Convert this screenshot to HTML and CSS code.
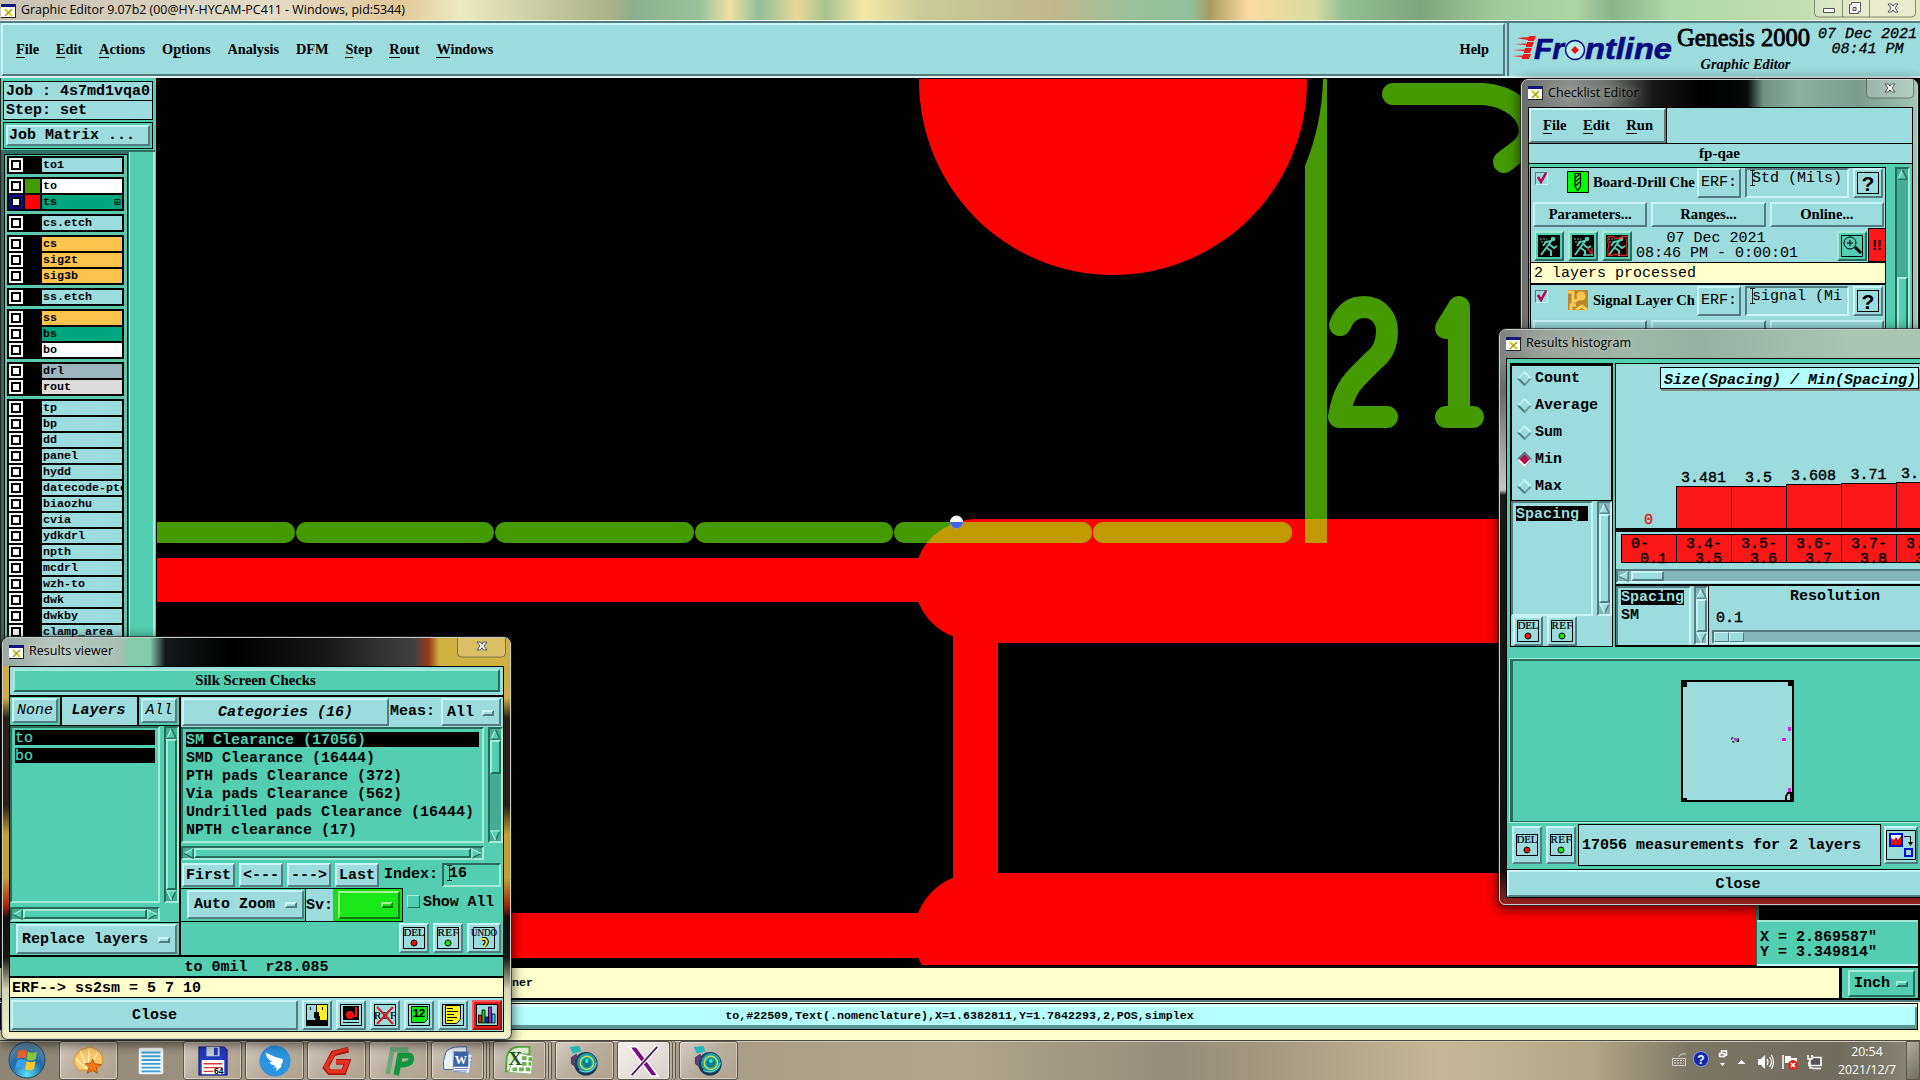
FILE: index.html
```html
<!DOCTYPE html>
<html lang="en">
<head>
  <meta charset="utf-8">
  <title>Graphic Editor 9.07b2</title>
  <link rel="stylesheet" href="styles.css">
</head>
<body>

<!-- shared icons -->
<svg width="0" height="0" class="defs">
  <symbol id="xapp" viewBox="0 0 15 14"><path fill="#fff" d="M0 0h15v14H0z"/><path fill="#14147c" d="M0 0h15v3H0z"/><path fill="#222" d="M14 0h1v14H0v-1h14z"/><path stroke="#d4cc20" stroke-width="2.4" d="M4 5l7 7"/><path stroke="#a09820" stroke-width="1.4" d="M11 5l-7 7"/></symbol>
  <symbol id="up" viewBox="0 0 12 12"><path class="tri" d="M6 1L1 11h10z"/><path class="tri-l" d="M1 11L6 1"/><path class="tri-d" d="M6 1l5 10H1"/></symbol>
  <symbol id="down" viewBox="0 0 12 12"><path class="tri" d="M6 11L1 1h10z"/><path class="tri-d" d="M11 1L6 11"/><path class="tri-l" d="M6 11L1 1h10"/></symbol>
  <symbol id="left" viewBox="0 0 12 12"><path class="tri" d="M1 6L11 1v10z"/><path class="tri-l" d="M1 6l10-5"/><path class="tri-d" d="M11 1v10L1 6"/></symbol>
  <symbol id="right" viewBox="0 0 12 12"><path class="tri" d="M11 6L1 1v10z"/><path class="tri-d" d="M11 6L1 11"/><path class="tri-l" d="M1 11V1l10 5"/></symbol>
  <symbol id="del" viewBox="0 0 24 24"><path fill="none" stroke="#000" d="M1.500 1.500h21v21h-21z"/><text x="12" y="10" class="itxt" textLength="21">DEL</text><circle cx="12" cy="17" r="3" fill="#f01010" stroke="#000"/></symbol>
  <symbol id="ref" viewBox="0 0 24 24"><path fill="none" stroke="#000" d="M1.500 1.500h21v21h-21z"/><text x="12" y="10" class="itxt" textLength="21">REF</text><circle cx="12" cy="17" r="3" fill="#10e810" stroke="#000"/></symbol>
  <symbol id="run" viewBox="0 0 24 24"><path d="M1 1h22v22H1z"/><g fill="none" stroke="#54ceb0" stroke-width="2"><path d="M15 6l-6 8-5 7M12 10l5 4 3-2M10 14l4 3v5M14 7l-5 1-3 4"/></g><circle cx="16" cy="5" r="2.300" fill="#54ceb0"/><path stroke="#54ceb0" stroke-dasharray="2 1" d="M3 5h7M4 8h4"/></symbol>
  <symbol id="disc" viewBox="0 0 34 34"><circle cx="18" cy="20" r="12.500" fill="#203858"/><circle cx="19" cy="19" r="10.500" fill="#18a0a8"/><circle cx="19" cy="19" r="7" fill="none" stroke="#d0d850" stroke-width="1.500"/><circle cx="19" cy="19" r="4.500" fill="#107880"/><circle cx="19" cy="17" r="2" fill="#30e8e0"/><path fill="#20b8b8" d="M1 2l10-1 2 6-9 2z"/><path fill="#5a4070" d="M2 13l6-4 1 5-4 4 2 6-5-4z"/><path fill="none" stroke="#7ce8d0" d="M11 27c8 4 16 0 18-8"/></symbol>
</svg>

<div class="desktop">

  <div class="editor">
    <div class="titlebar">
      <svg class="app"><use href="#xapp"/></svg>
      <span>Graphic Editor 9.07b2 (00@HY-HYCAM-PC411 - Windows, pid:5344)</span>
      <div class="winbtns">
        <svg width="103" height="18" viewBox="0 0 103 18"><path class="wb" d="M.5 0v13q0 4 4 4h93q4 0 4-4V0M28.500 0v17M55.500 0v17"/><path class="wg" d="M9.500 8.500h11v4h-11z"/><path class="wg" fill-rule="evenodd" d="M37.500 2.500h9v9h-2v2h-9v-9h2zM39 7.500v3h3v-3z"/><path class="wg" d="M74 4h3.500l1.500 2.200L80.500 4H84l-3 4 3 4h-3.500L79 9.800 77.500 12H74l3-4z"/></svg>
      </div>
    </div>

    <div class="header">
      <nav class="menubar raised">
        <span><u>F</u>ile</span><span><u>E</u>dit</span><span><u>A</u>ctions</span><span>O<u>p</u>tions</span><span>Analysis</span><span>DFM</span><span><u>S</u>tep</span><span><u>R</u>out</span><span><u>W</u>indows</span>
        <span class="help">Help</span>
      </nav>
      <div class="brand">
        <svg width="161" height="32" viewBox="0 0 161 32">
          <g fill="#f01818"><path d="M5 6l12-1v-1h7l-2 5h-6V8zM3 12l12-.500V10h7l-2 5h-6v-2zM1 18l12-.500V16h7l-2 5h-6v-2zM0 24l11-.500V22h8l-2 5h-7v-2z"/></g>
          <text x="22" y="27" class="logo" textLength="30" lengthAdjust="spacingAndGlyphs">Fr</text>
          <circle cx="63" cy="18" r="9.500" fill="#b8f0f0" stroke="#0a0a80" stroke-width="1.500"/><path fill="#f01010" d="M63 14l4 4-4 4-4-4z"/>
          <text x="73" y="27" class="logo" textLength="87" lengthAdjust="spacingAndGlyphs">ntline</text>
        </svg>
        <div class="product"><b>Genesis 2000</b><i>Graphic Editor</i></div>
        <div class="date">07 Dec 2021<br>08:41 PM</div>
      </div>
    </div>

    <div class="work">
      <aside class="side">
        <div class="job">Job : 4s7md1vqa0</div>
        <div class="job">Step: set</div>
        <div class="matrix"><div class="raised">Job Matrix ...</div></div>
        <div class="layers">
          <div class="list">
            <div class="grp"><div class="ly"><i></i><em></em><b>to1</b></div></div>
            <div class="grp"><div class="ly"><i></i><em class="g"></em><b class="white">to</b></div><div class="ly on"><i></i><em class="r"></em><b class="mask">ts</b><s>⊞</s></div></div>
            <div class="grp"><div class="ly"><i></i><em></em><b>cs.etch</b></div></div>
            <div class="grp"><div class="ly"><i></i><em></em><b class="sig">cs</b></div><div class="ly"><i></i><em></em><b class="sig">sig2t</b></div><div class="ly"><i></i><em></em><b class="sig">sig3b</b></div></div>
            <div class="grp"><div class="ly"><i></i><em></em><b>ss.etch</b></div></div>
            <div class="grp"><div class="ly"><i></i><em></em><b class="sig">ss</b></div><div class="ly"><i></i><em></em><b class="mask">bs</b></div><div class="ly"><i></i><em></em><b class="white">bo</b></div></div>
            <div class="grp"><div class="ly"><i></i><em></em><b class="drl">drl</b></div><div class="ly"><i></i><em></em><b class="rout">rout</b></div></div>
            <div class="grp">
              <div class="ly"><i></i><em></em><b>tp</b></div>
              <div class="ly"><i></i><em></em><b>bp</b></div>
              <div class="ly"><i></i><em></em><b>dd</b></div>
              <div class="ly"><i></i><em></em><b>panel</b></div>
              <div class="ly"><i></i><em></em><b>hydd</b></div>
              <div class="ly"><i></i><em></em><b>datecode-ptc</b></div>
              <div class="ly"><i></i><em></em><b>biaozhu</b></div>
              <div class="ly"><i></i><em></em><b>cvia</b></div>
              <div class="ly"><i></i><em></em><b>ydkdrl</b></div>
              <div class="ly"><i></i><em></em><b>npth</b></div>
              <div class="ly"><i></i><em></em><b>mcdrl</b></div>
              <div class="ly"><i></i><em></em><b>wzh-to</b></div>
              <div class="ly"><i></i><em></em><b>dwk</b></div>
              <div class="ly"><i></i><em></em><b>dwkby</b></div>
              <div class="ly"><i></i><em></em><b>clamp_area</b></div>
            </div>
          </div>
          <div class="trough"></div>
        </div>
      </aside>

      <!-- board view -->
      <svg class="board" width="1600" height="888" viewBox="156 78 1600 888">
        <path d="M156 78h1600v888H156z"/>
        <clipPath id="view"><path d="M157 79h1599v886H157z"/></clipPath>
        <clipPath id="copper"><path d="M1800 519H977a63 61 0 0 0-63 61v63h886z"/></clipPath>
        <g clip-path="url(#view)">
          <g fill="#f00">
            <ellipse cx="1113" cy="81" rx="194" ry="194"/>
            <path d="M157 558h770v44H157zM976 519h780v124H976zM953 600h45v300h-45zM976 873h780v92H976zM157 913h770v45H157z"/>
            <ellipse cx="977" cy="580" rx="63" ry="61"/>
            <ellipse cx="977" cy="935" rx="63" ry="62"/>
          </g>
          <g fill="#449a00">
            <path d="M1323 79h4v464h-22V166q17-42 18-87z"/>
            <rect x="97" y="522" width="198" height="21" rx="10"/><rect x="296" y="522" width="198" height="21" rx="10"/><rect x="495" y="522" width="199" height="21" rx="10"/>
            <rect x="695" y="522" width="198" height="21" rx="10"/><rect x="894" y="522" width="198" height="21" rx="10"/><rect x="1093" y="522" width="199" height="21" rx="10"/>
          </g>
          <g fill="#c09a00" clip-path="url(#copper)"><rect x="695" y="522" width="198" height="21" rx="10"/><rect x="894" y="522" width="198" height="21" rx="10"/><rect x="1093" y="522" width="199" height="21" rx="10"/><path d="M1305 519h22v24h-22z"/></g>
          <g fill="none" stroke="#449a00" stroke-width="22" stroke-linecap="round" stroke-linejoin="round">
            <path d="M1393 94h90C1510 96 1530 112 1530 132 1529 146 1516 152 1504 162"/>
            <path d="M1340 325C1345 313 1353 307 1364 307 1378 307 1387 318 1387 331 1387 345 1382 354 1374 360L1358 376C1346 388 1342 400 1339 417H1387"/>
            <path d="M1446 328l13-21v110M1446 417h27"/>
          </g>
          <circle cx="956.500" cy="522" r="6.500" fill="#fff"/><path fill="#4060f0" d="M950 522a6.500 6.500 0 0 0 13 0z"/>
        </g>
      </svg>

      <div class="right">
        <div class="mini"></div>
        <div class="coords">X = 2.869587"<br>Y = 3.349814"</div>
      </div>
    </div>

    <div class="prompt"><div class="msg">ner</div><div class="unit green"><div class="raised opt">Inch<span class="tab"></span></div></div></div>
    <div class="status"><div>to,#22509,Text(.nomenclature),X=1.6382811,Y=1.7842293,2,POS,simplex</div></div>
  </div>

  <!-- checklist editor -->
  <div class="win checklist">
    <div class="wtitle"><svg class="app"><use href="#xapp"/></svg><span>Checklist Editor</span>
      <svg class="close" width="48" height="20" viewBox="0 0 48 20"><path class="wb" d="M.5 0v15q0 4 4 4h39q4 0 4-4V0"/><path class="wg" d="M19 5h3.500L24 7.200 25.500 5H29l-3 4 3 4h-3.500L24 10.800 22.500 13H19l3-4z"/></svg>
    </div>
    <div class="wbody">
      <div class="cmenu raised"><span><u>F</u>ile</span><span><u>E</u>dit</span><span><u>R</u>un</span></div>
      <div class="cname">fp-qae</div>
      <div class="cmain green">
        <div class="checks">
          <div class="chk">
            <div class="row1">
              <span class="tick"><svg width="13" height="13"><path d="M3 5l3 5 5-9" fill="none" stroke="#b80050" stroke-width="2.500"/></svg></span>
              <svg width="22" height="22" viewBox="0 0 22 22"><path fill="#0f0" stroke="#000" d="M.5.500h21v21H.5z"/><path fill="none" stroke="#000" stroke-width="1.200" d="M8 2.500h5.500v13l-2.800 4-2.700-4zM8 7l5-4M8 11l5-4M8 15l5-4"/></svg>
              <span class="cn">Board-Drill Che</span>
              <span class="raised erf">ERF:</span><span class="field caret">Std (Mils)</span><span class="raised q"><b>?</b></span>
            </div>
            <div class="row2"><span class="raised">Parameters...</span><span class="raised">Ranges...</span><span class="raised">Online...</span></div>
            <div class="row3">
              <span class="green raised ib"><svg><use href="#run"/></svg></span>
              <span class="green raised ib"><svg viewBox="0 0 24 24"><use href="#run"/><path fill="none" stroke="#d02020" stroke-width="1.500" d="M16 14l5 6v-6"/><path stroke="#54ceb0" stroke-width="1.500" d="M12 21h10"/></svg></span>
              <span class="green raised ib"><svg viewBox="0 0 24 24"><use href="#run"/><path fill="none" stroke="#e02020" stroke-width="1.300" d="M3 2.500h5l2 2h5l2-2h5v6l-1 3 1 3v7h-6l-2-1H9l-2 1H3v-7l1-3-1-3z"/></svg></span>
              <span class="when">07 Dec 2021<br>08:46 PM - 0:00:01</span>
              <span class="green raised ib"><svg viewBox="0 0 24 24"><path fill="none" stroke="#000" d="M1.500 1.500h21v21h-21z"/><circle cx="10" cy="9" r="6" fill="none" stroke="#000"/><path stroke="#000" d="M7 9h6M10 6v6"/><path stroke="#000" stroke-width="3" d="M15 13l6 6"/></svg></span>
              <span class="alert">!!</span>
            </div>
            <div class="processed">2 layers processed</div>
          </div>
          <div class="chk">
            <div class="row1">
              <span class="tick"><svg width="13" height="13"><path d="M3 5l3 5 5-9" fill="none" stroke="#b80050" stroke-width="2.500"/></svg></span>
              <svg width="22" height="22" viewBox="0 0 22 22"><path fill="#b88830" d="M1 1h20v20H1z"/><path fill="none" stroke="#fcc850" stroke-width="3" d="M1 3h5v10l6-3M4 21v-5h5M9 21l6-4 5 4"/><circle cx="14" cy="7" r="4.500" fill="#fcc850"/></svg>
              <span class="cn">Signal Layer Ch</span>
              <span class="raised erf">ERF:</span><span class="field caret">signal (Mi</span><span class="raised q"><b>?</b></span>
            </div>
            <div class="row2"><span class="raised"></span><span class="raised"></span><span class="raised"></span></div>
          </div>
        </div>
        <div class="vbar"><svg><use href="#up"/></svg><div class="gap"></div><div class="thumb raised"></div></div>
      </div>
    </div>
  </div>

  <!-- results histogram -->
  <div class="win histogram">
    <div class="wtitle"><svg class="app"><use href="#xapp"/></svg><span>Results histogram</span></div>
    <div class="wbody green">
      <div class="htop teal">
        <div class="hleft">
          <div class="radios">
            <label><i></i>Count</label><label><i></i>Average</label><label><i></i>Sum</label><label class="sel"><i></i>Min</label><label><i></i>Max</label>
          </div>
          <div class="lists">
            <div class="sunk lb"><div class="hot">Spacing</div></div>
            <div class="vbar"><svg><use href="#up"/></svg><div class="thumb raised"></div><svg><use href="#down"/></svg></div>
          </div>
          <div class="btns"><span class="raised ib"><svg><use href="#del"/></svg></span><span class="raised ib"><svg><use href="#ref"/></svg></span></div>
        </div>
        <div class="hright">
          <div class="chart">
            <div class="caption">Size(Spacing) / Min(Spacing)</div>
            <div class="bars">
              <div class="bar zero"><span>0</span><i style="height:0"></i></div>
              <div class="bar"><span>3.481</span><i style="height:42px"></i></div>
              <div class="bar"><span>3.5</span><i style="height:42px"></i></div>
              <div class="bar"><span>3.608</span><i style="height:44px"></i></div>
              <div class="bar"><span>3.71</span><i style="height:45px"></i></div>
              <div class="bar cut"><span>3.</span><i style="height:46px"></i></div>
            </div>
            <div class="ranges"><div>0-<br> 0.1</div><div>3.4-<br> 3.5</div><div>3.5-<br> 3.6</div><div>3.6-<br> 3.7</div><div>3.7-<br> 3.8</div><div>3.<br> 3</div></div>
            <div class="hbar"><svg><use href="#left"/></svg><div class="thumb raised"></div></div>
          </div>
          <div class="hlow">
            <div class="sunk lb2"><div class="hot">Spacing</div><div>SM</div></div>
            <div class="vbar"><svg><use href="#up"/></svg><div class="thumb raised"></div><svg><use href="#down"/></svg></div>
            <div class="reso"><h4>Resolution</h4><span>0.1</span><div class="slider"><i></i><i></i></div></div>
          </div>
        </div>
      </div>
      <div class="preview">
        <svg width="114" height="123" viewBox="0 0 114 123"><path fill="#9cdcdc" stroke="#000" stroke-width="2" d="M1 1h111v120H1z"/><path d="M1 1h5v6H1zM107 1h5v5h-5zM1 118h5v3H1z"/><path fill="none" stroke="#000" stroke-width="2" d="M105 122v-6l2-3h3v9"/><path fill="#d020e0" d="M107 47h3v4h-3zM101 58h4v3h-4zM107 108h3v4h-3z"/><path fill="#a050c0" d="M53 58h5v3h-5z"/><path fill="none" stroke="#000" d="M52.500 58h-2v1.500M51.500 61v1h2M57.500 59v2.500h-2"/></svg>
      </div>
      <div class="hinfo teal">
        <span class="raised ib"><svg><use href="#del"/></svg></span><span class="raised ib"><svg><use href="#ref"/></svg></span>
        <div class="count">17056 measurements for 2 layers</div>
        <span class="raised ib wide"><svg viewBox="0 0 30 30"><path fill="none" stroke="#000" d="M.5.500h29v29H.5z"/><path fill="#fff" stroke="#0010d0" stroke-width="2" d="M4 4h12v12H4z"/><path fill="#e01010" d="M5 14V8l3 2 2-3 2 3 3-4v9H5z"/><path fill="none" stroke="#000" d="M18 6.500h6.500V15"/><path d="M22 12h5l-2.500 4z"/><path fill="none" stroke="#0010d0" stroke-width="2" d="M19 19h7v7h-7z"/></svg></span>
      </div>
      <div class="hclose teal raised">Close</div>
    </div>
  </div>

  <!-- results viewer -->
  <div class="win viewer">
    <div class="wtitle"><svg class="app"><use href="#xapp"/></svg><span>Results viewer</span>
      <svg class="close" width="49" height="20" viewBox="0 0 49 20"><path class="wb" d="M.5 0v15q0 4 4 4h40q4 0 4-4V0"/><path class="wg" d="M20 4h3.500L25 6.200 26.500 4H30l-3 4 3 4h-3.500L25 9.800 23.500 12H20l3-4z"/></svg>
    </div>
    <div class="wbody green">
      <div class="vhead"><div class="raised">Silk Screen Checks</div></div>
      <div class="vmain">
        <div class="vl">
          <div class="tabs"><span class="teal raised">None</span><b>Layers</b><span class="teal raised">All</span></div>
          <div class="lists">
            <div class="sunk lb"><div class="hot">to</div><div class="hot">bo</div></div>
            <div class="vbar"><svg><use href="#up"/></svg><div class="thumb raised"></div><svg><use href="#down"/></svg></div>
          </div>
          <div class="hbar"><svg><use href="#left"/></svg><div class="thumb raised"></div><svg><use href="#right"/></svg></div>
          <div class="repl"><div class="teal raised opt">Replace layers<span class="tab"></span></div></div>
        </div>
        <div class="vr">
          <div class="cats teal"><div class="raised cat">Categories (16)</div><span>Meas:</span><div class="raised opt">All<span class="tab"></span></div></div>
          <div class="lists">
            <div class="sunk lb"><div class="hot">SM Clearance (17056)</div><div>SMD Clearance (16444)</div><div>PTH pads Clearance (372)</div><div>Via pads Clearance (562)</div><div>Undrilled pads Clearance (16444)</div><div>NPTH clearance (17)</div></div>
            <div class="vbar"><svg><use href="#up"/></svg><div class="thumb raised short"></div><div class="gap"></div><svg><use href="#down"/></svg></div>
          </div>
          <div class="hbar"><svg><use href="#left"/></svg><div class="thumb raised"></div><svg><use href="#right"/></svg></div>
          <div class="nav"><span class="teal raised">First</span><span class="teal raised">&lt;---</span><span class="teal raised">---&gt;</span><span class="teal raised">Last</span><em>Index:</em><span class="field caret">16</span></div>
          <div class="zoomrow">
            <div class="zb"><div class="teal raised opt">Auto Zoom<span class="tab"></span></div></div>
            <div class="sv"><span>Sv:</span><div class="lime"><div class="raised opt"><span class="tab"></span></div></div></div>
            <i class="cb"></i><span>Show All</span>
          </div>
          <div class="btns teal"><span class="raised ib"><svg><use href="#del"/></svg></span><span class="raised ib"><svg><use href="#ref"/></svg></span>
            <span class="raised ib undo"><svg viewBox="0 0 28 24"><path fill="none" stroke="#000" d="M3.500 1.500h21v21h-21z"/><text x="14" y="10" class="itxt" textLength="26" lengthAdjust="spacingAndGlyphs">UNDO</text><path fill="none" stroke="#000" stroke-width="4" d="M12 13h3q3 2 1 5l-2 2"/><path fill="none" stroke="#fce820" stroke-width="2" d="M11 13h4q3 2 1 5l-2 3"/></svg></span></div>
        </div>
      </div>
      <div class="vinfo">to 0mil  r28.085</div>
      <div class="verf">ERF--&gt; ss2sm = 5 7 10</div>
      <div class="vfoot teal">
        <div class="raised">Close</div>
        <span class="raised ib"><svg viewBox="0 0 24 24"><path d="M1 1h22v22H1z"/><path fill="#9cdcdc" d="M2 2h9v12l-1 3H2z"/><path fill="#fcf020" d="M12 2h10v15h-7v-4h-3z"/><path d="M5 4h1v3H5zM17 4h1v3h-1zM9 9h5v6H9z"/></svg></span>
        <span class="raised ib"><svg viewBox="0 0 24 24"><path fill="#9cdcdc" stroke="#000" d="M1.500 1.500h21v21h-21z"/><path d="M4 3h16v14H4z"/><path stroke="#000" d="M4 19.500h16"/><circle cx="11" cy="12" r="4" fill="#f01010"/><path fill="#f01010" d="M16 4h2v10h-4v-2h2z"/></svg></span>
        <span class="raised ib"><svg viewBox="0 0 24 24"><path fill="none" stroke="#000" d="M1.500 1.500h21v21h-21z"/><text x="12" y="16" class="itxt" textLength="22">REF</text><path stroke="#e01818" stroke-width="2" d="M4 4l16 17M20 4L4 21"/></svg></span>
        <span class="raised ib"><svg viewBox="0 0 24 24"><path fill="#9cdcdc" stroke="#000" d="M1.500 1.500h21v21h-21z"/><path fill="#14e814" stroke="#000" d="M4.500 3.500h16v13l-3 3h-13z"/><text x="12" y="14" class="itxt big">12</text></svg></span>
        <span class="raised ib"><svg viewBox="0 0 24 24"><path fill="#9cdcdc" stroke="#000" d="M1.500 1.500h21v21h-21z"/><path fill="#fcf020" stroke="#000" d="M4.500 2.500h15v14l-4 4h-11z"/><path stroke="#000" d="M6 5.500h6M6 8.500h11M6 11.500h7M6 14.500h10M6 17.500h6"/></svg></span>
        <span class="raised ib hot-red"><svg viewBox="0 0 24 24"><path fill="#9cdcdc" stroke="#000" d="M1.500 1.500h21v21h-21z"/><g stroke="#000" stroke-width=".8"><path fill="#e01818" d="M3.500 12h3v8h-3z"/><path fill="#20c020" d="M7 7h3v13H7z"/><path fill="#1818e0" d="M10.500 14h3v6h-3z"/><path fill="#b020c0" d="M13.500 4h3v16h-3z"/><path fill="#20d8e8" d="M17 11h3v9h-3z"/></g></svg></span>
      </div>
    </div>
  </div>

  <!-- taskbar -->
  <div class="taskbar">
    <div class="orb"><svg width="38" height="38" viewBox="0 0 38 38"><defs><radialGradient id="orbg" cx=".5" cy=".9" r=".9"><stop offset="0" stop-color="#5ce0f8"/><stop offset=".5" stop-color="#1c6ca8"/><stop offset="1" stop-color="#6c90a8"/></radialGradient></defs><circle cx="19" cy="19" r="18" fill="url(#orbg)" stroke="#28485c"/><path fill="#f06028" d="M10 10q5-3 9 0l-1 8q-4-3-9 0z"/><path fill="#8cc83c" d="M20 10.500q4 2.500 9 0l-1.500 8q-5 2-9 0z"/><path fill="#3ca0e8" d="M9 19.500q4-3 9 0l-1.500 8q-4-3-9 0z"/><path fill="#fcc828" d="M18.500 20q4 2.500 9 0l-1.500 8q-4 2.500-9 0z"/></svg></div>
    <div class="tb"><svg viewBox="0 0 34 34"><path fill="#fcc868" stroke="#e08820" d="M7 27L1 20Q0 14 4 10 7 4 13 4q5-4 10 0 6 2 8 8 2 6-2 11l-6 4z"/><path fill="none" stroke="#fff0c0" stroke-width="1.500" d="M14 26L3 14M15 25L8 7M16 25L17 4M17 25L26 8"/><path fill="#f07818" stroke="#b85008" d="M21 15l2 5 7 1-5 3 1 6-5-3-6 3 2-6-4-4 6-1z"/></svg></div>
    <div class="tb flat"><svg viewBox="0 0 34 34"><rect x="4" y="3" width="26" height="28" rx="2" fill="#eef6fa"/><path stroke="#3c9cd0" stroke-width="2" d="M7 8h20M7 12h20M7 16h20M7 20h20M7 24h20M7 28h20"/></svg></div>
    <div class="tb"><svg viewBox="0 0 34 34"><path fill="#2438c0" stroke="#101c70" d="M2 2h27l3 3v27H2z"/><path fill="#c4ccd8" d="M10 2h14v10H10z"/><path fill="#2438c0" d="M18 3h4v8h-4z"/><path fill="#fff" d="M5 16h24v15H5z"/><path stroke="#d03838" stroke-width="1.500" d="M7 20h20M7 24h20M7 28h10"/><text x="23" y="31" class="t64">64</text></svg></div>
    <div class="tb"><svg viewBox="0 0 34 34"><circle cx="17" cy="17" r="16.500" fill="#2c94e0"/><path fill="#fff" d="M7 8q9 5 18 7 1 4-2 7l1 1-6 5 1-4h-4l3-2q-6-1-7-4l3 0q-6-3-7-10z"/></svg></div>
    <div class="tb"><svg viewBox="0 0 34 34"><path fill="none" stroke="#a81810" stroke-width="6" d="M29 5L13 9 5 24l4 5h15l4-11H16"/><path fill="none" stroke="#e83020" stroke-width="4" d="M29 4L14 8 5 23l4 5h15l4-10H16"/></svg></div>
    <div class="tb"><svg viewBox="0 0 34 34"><path fill="none" stroke="#6ca878" stroke-width="5" d="M5 31L10 5h17"/><path fill="none" stroke="#109840" stroke-width="6" d="M14 32l4-21h8q6 0 3 7-3 3-12 3"/></svg></div>
    <div class="tb stack w54"><svg viewBox="0 0 34 34"><path fill="#e8f0f8" stroke="#3868a8" d="M4 8q4-6 14-6h8v24H2q-2-8 2-18z"/><path fill="#fff" stroke="#8ca0c0" d="M12 7l20 3-3 20-17-2z"/><path fill="#3c64a8" d="M13 7h15v16H12z"/><text x="20" y="20" class="off">W</text><path stroke="#5878b0" d="M13 25h15M13 27.500h14M29 14h2M29 18h2"/></svg></div>
    <div class="tb stack w54 ex"><svg viewBox="0 0 34 34"><path fill="#dcecd0" stroke="#58a040" stroke-width="2" d="M3 12Q6 2 16 2h11v8H16v18H2z"/><path fill="#fff" stroke="#90b880" d="M12 8l19 4-2 19-24-2z"/><path fill="#6cb050" d="M19 12h5v4h-5zM26 13h4v4h-4zM19 18h5v4h-5zM26 18h3v4h-3zM9 24h5v4H9zM16 24h5v4h-5zM23 24h5v4h-5z"/><text x="12" y="21" class="off xl">X</text></svg></div>
    <div class="tb disc"><svg><use href="#disc"/></svg></div>
    <div class="tb stack w54 act"><svg viewBox="0 0 34 34"><path fill="#7c0c84" stroke="#fff" stroke-width="1.500" d="M2 2h7l23 31h-7z"/><path stroke="#fff" stroke-width="4" d="M31 2L4 32"/><path stroke="#502058" stroke-width="2" d="M31 2L4 32"/></svg></div>
    <div class="tb disc"><svg><use href="#disc"/></svg></div>
    <div class="tray">
      <svg width="158" height="40" viewBox="1670 1040 158 40">
        <g fill="none" stroke="#e4e4e0"><path d="M1674 1059.500h10M1674 1062h10" stroke-dasharray="2 1"/><path d="M1672.500 1057.500h13v7h-13zM1679 1056q1-4 7-3" opacity=".8"/></g>
        <circle cx="1701" cy="1058" r="7.500" fill="#1428b0" stroke="#8898d0"/><text x="1701" y="1063" class="qm">?</text>
        <path fill="none" stroke="#fff" stroke-width="1.500" d="M1719.500 1052.500h5v3h-5zM1721.500 1052v-2h5v4h-2"/><path fill="#fff" d="M1720 1062h5l-2.500 3zM1737.500 1063h8l-4-4z"/>
        <path fill="#fff" d="M1758 1058h3l4-4v14l-4-4h-3z"/><path fill="none" stroke="#fff" stroke-width="1.200" d="M1767 1058q2 3 0 6M1769.500 1056q4 5 0 10M1771.500 1054q4 7 0 14"/>
        <path fill="none" stroke="#fff" stroke-width="1.500" d="M1783 1054v14"/><path fill="#fff" d="M1785 1055h6v2h6v7h-6v-2h-6z"/><circle cx="1793" cy="1064" r="5" fill="#d82820"/><path stroke="#fff" stroke-width="1.600" d="M1791 1062l4 4M1795 1062l-4 4"/>
        <path fill="#555" stroke="#fff" stroke-width="1.600" d="M1812 1056.500h9v8h-12v-4M1813 1067.500h8"/><path fill="none" stroke="#fff" stroke-width="1.500" d="M1808 1054v4h4v-4M1810 1058v9h3"/>
      </svg>
      <div class="clock">20:54<br>2021/12/7</div>
      <div class="peek"></div>
    </div>
  </div>
</div>
</body>
</html>
```

FILE: styles.css
```css
* { box-sizing: border-box; }

body {
  margin: 0;
  background: #000;
  overflow: hidden;
}

.defs { position: absolute; }

.desktop {
  position: relative;
  display: flex;
  flex-direction: column;
  width: 1920px;
  height: 1080px;
  overflow: hidden;
  font: bold 15px/18px "Liberation Mono", monospace;
  color: #000;
}

.desktop, .teal { --face: #9cdcdc; --light: #c8f6f6; --dark: #527c80; --trough: #84b8b8; }
.green { --face: #54ceb0; --light: #a4ecd8; --dark: #286c5c; --trough: #44ac94; }

.raised {
  background: var(--face);
  border: 2px solid;
  border-color: var(--light) var(--dark) var(--dark) var(--light);
}
.sunk, .field {
  border: 2px solid;
  border-color: var(--dark) var(--light) var(--light) var(--dark);
}
.caret::before {
  content: "";
  display: inline-block;
  width: 5px;
  height: 14px;
  margin: 0 -3px 0 -3px;
  vertical-align: top;
  border: solid #222;
  border-width: 1px 0;
  background: linear-gradient(#222, #222) 2px 0 / 1px 100% no-repeat;
}
u { text-decoration: none; border-bottom: 1px solid #000; }

.tri { fill: var(--face); }
.tri-l { fill: none; stroke: var(--light); stroke-width: 1.5; }
.tri-d { fill: none; stroke: var(--dark); stroke-width: 1.5; }
.itxt { font: 11px "Liberation Serif", serif; text-anchor: middle; stroke: #000; stroke-width: .2; }
.itxt.big { font: bold 11px "Liberation Sans", sans-serif; }

.ib { display: flex; align-items: center; justify-content: center; width: 30px; height: 30px; flex: none; }
.ib svg { width: 24px; height: 24px; display: block; }

.opt { display: flex; align-items: center; justify-content: space-between; }
.tab { width: 12px; height: 6px; border: 2px solid; border-color: var(--light) var(--dark) var(--dark) var(--light); }

/* main window */
.editor { display: flex; flex-direction: column; height: 1040px; }

.titlebar {
  display: flex;
  height: 21px;
  padding-left: 1px;
  font: 12.4px/20px "Open Sans", sans-serif;
  background: linear-gradient(90deg, #c8c2b4, #e4dcc8 14%, #e0c898 20.8%, #ecebc0 24%, #a8b088 32%, #88b090 33%, #98c49c 36.5%, #f0e0a0 38%, #90c098 39.5%, #e8d898 41.5%, #a8c490 43%, #f4e8a8 45%, #c8cc98 48%, #c0b88c 55%, #98c09c 59%, #90c09c 62%, #a89c60 63%, #f8dca0 65%, #d8dca0 68.5%, #90c094 70%, #80a480 74%, #a0cc9c 78%, #b0d4a4 82%, #88b48c 84%, #b0d8a8 87%, #c4dcb0 94%, #e4e8c0 97%);
  border-bottom: 1px solid #eef2ea;
}
.app { width: 15px; height: 14px; margin: 4px 5px 0 0; flex: none; }
.titlebar span { white-space: nowrap; }
.winbtns { margin: 0 3px 0 auto; }
.winbtns svg { display: block; }
.wb { fill: rgba(255,255,255,.2); stroke: rgba(70,75,60,.6); }
.wg { fill: #fafafa; stroke: #555; }

.header { display: flex; height: 57px; background: #9cdcdc; border-top: 2px solid #527c80; border-bottom: 2px solid #dcf4f4; }
.menubar {
  display: flex;
  align-items: center;
  gap: 16.9px;
  width: 1504px;
  flex: none;
  margin: 0 2px 0 1px;
  padding: 0 14px 2px 13px;
  font: bold 14.3px/16px "Liberation Serif", serif;
}
.help { margin-left: auto; }
.brand {
  display: flex;
  width: 412px;
  padding: 3px 3px 0 2px;
  border-left: 2px solid #527c80;
}
.brand svg { margin: 6px 0 0 1px; flex: none; }
.logo { font: italic bold 29px "Liberation Sans", sans-serif; fill: #0a0a80; stroke: #0a0a80; stroke-width: .6; }
.product { display: flex; flex-direction: column; align-items: center; width: 141px; flex: none; font-family: "Liberation Serif", serif; }
.product b { font-size: 24.6px; line-height: 25px; font-weight: normal; -webkit-text-stroke: .8px #000; margin-top: -1px; white-space: nowrap; }
.product i { font-size: 14.4px; line-height: 20px; margin-top: 4px; margin-left: 4px; }
.date { font: italic 15px/15px "Liberation Mono", monospace; -webkit-text-stroke: .3px #000; text-align: center; white-space: nowrap; margin-left: 4px; padding-top: 1px; }

.work { display: flex; height: 888px; background: #000; }

.side { width: 156px; height: 570px; background: #54ceb0; padding: 3px 1px 0 2px; border-left: 1px solid #222; }
.job { height: 20px; width: 150px; margin-bottom: -1px; padding-left: 2px; background: #9cdcdc; border: 1px solid #000; line-height: 20px; white-space: pre; }
.matrix { width: 150px; height: 27px; margin-top: 3px; padding: 2px; border: 1px solid #000; }
.matrix .raised { height: 21px; padding-left: 1px; line-height: 18px; }
.layers { display: flex; margin: 1px 0 0 -2px; background: #2e6e60; border-top: 2px solid #2e6e60; height: 502px; }
.list { width: 124px; flex: none; margin: 2px 0 0 3px; padding: 1px 2px; background: #5cc8ac; border: 1px solid #000; display: flex; flex-direction: column; gap: 3px; overflow: hidden; }
.grp { flex: none; display: flex; flex-direction: column; gap: 2px; padding: 2px; background: #000; width: 117px; }
.ly { position: relative; display: flex; gap: 2px; height: 14px; font-size: 11.67px; line-height: 15px; }
.ly i { width: 14px; flex: none; background: #fff; border: 2px solid #fff; outline: 2px solid #000; outline-offset: -4px; }
.ly em { width: 15px; flex: none; }
.ly em.g { background: #449a00; }
.ly em.r { background: #f00; }
.ly b { flex: 1; overflow: hidden; white-space: nowrap; padding-left: 1px; background: #9cdcdc; }
.ly b.white { background: #fff; }
.ly b.mask { background: #00a67e; }
.ly b.sig { background: #fcc44c; }
.ly b.drl { background: #9cb4bc; }
.ly b.rout { background: #dcdcdc; }
.ly.on i { border-color: #0a0aa0; }
.ly s { position: absolute; right: 1px; top: 0; font: 9px/14px "DejaVu Sans", sans-serif; text-decoration: none; }
.trough { flex: 1; margin-left: 1px; background: #54ceb0; border: solid #a4ecd8; border-width: 0 2px 0 1px; }

.board { display: block; flex: none; }
.right { display: flex; flex-direction: column; width: 162px; background: #54ceb0; border-left: 1px solid #286c5c; }
.mini { height: 842px; background: #000; border: solid #286c5c; border-width: 0 0 0 2px; }
.coords { flex: 1; padding: 8px 0 0 3px; line-height: 15px; border-top: 2px solid #a4ecd8; border-bottom: 2px solid #c8f6f6; }

.prompt { display: flex; height: 34px; border: solid #000; border-width: 2px 0 2px; }
.msg { width: 1842px; padding-left: 512px; background: #ffffcc; border-right: 3px solid #000; font-size: 11.67px; line-height: 30px; }
.unit { flex: 1; padding: 2px 3px 1px 6px; background: #54ceb0; border-right: 2px solid #000; }
.unit .opt { height: 27px; padding: 1px 5px 0 4px; }

.status { height: 40px; background: #ffffcc; border-top: 2px solid #527c80; padding: 1px 2px 0 0; }
.status div { height: 27px; background: #b4ffff; border: 1px solid #000; box-shadow: inset 0 3px 0 #dcffff, inset -2px -4px 0 #5c9494; text-align: center; font-size: 11.67px; line-height: 25px; padding-left: 1px; }

/* floating windows */
.win { position: absolute; border-radius: 7px 7px 6px 6px; border: 1px solid #c8ccc8; box-shadow: 0 0 0 1px rgba(40,40,40,.7), 0 3px 12px 2px rgba(0,0,0,.6); }
.wtitle { display: flex; font: 12.6px/26px "Open Sans", sans-serif; height: 28px; position: relative; }
.wtitle span { text-shadow: 0 0 6px rgba(255,255,255,.5); }
.wtitle .app { margin-top: 7px; }
.close { position: absolute; top: 0; right: 4px; }
.wbody { overflow: hidden; }

.vbar { display: flex; flex-direction: column; align-items: center; width: 15px; background: var(--trough); border: 2px solid; border-color: var(--dark) var(--light) var(--light) var(--dark); }
.vbar svg, .hbar svg { width: 11px; height: 11px; flex: none; }
.vbar .thumb { flex: 1; width: 11px; }
.vbar .gap { flex: 1; }
.hbar { display: flex; align-items: center; height: 14px; background: var(--trough); border: 2px solid; border-color: var(--dark) var(--light) var(--light) var(--dark); }
.hbar .thumb { flex: 1; height: 10px; }
.hot { background: #000; color: var(--face); }

/* checklist editor */
.checklist {
  left: 1521px; top: 79px; width: 397px; height: 300px; padding: 0 5px 0 6px;
  background: linear-gradient(90deg, #6c706c, #8c908c 12%, #707470 22%, #181818 33%, #000 45%, #050808 57%, #709084 61%, #8cb0a0 70%, #7c9c90 85%, #a4c4b4);
}
.checklist .wtitle { height: 27px; line-height: 25px; }
.checklist .wtitle .app { margin-top: 6px; }
.checklist .close { right: -2px; top: -1px; }
.checklist .wbody { width: 385px; height: 260px; background: #9cdcdc; border: 1px solid #000; }
.cmenu { display: flex; align-items: center; gap: 16.5px; width: 137px; height: 35px; padding-left: 12px; outline: 1px solid #000; font: bold 14.6px/15px "Liberation Serif", serif; }
.cname { height: 21px; border: solid #000; border-width: 1px 0; text-align: center; padding-right: 2px; font: bold 15px/18px "Liberation Serif", serif; }
.cmain { display: flex; background: #54ceb0; height: 220px; padding: 3px 3px 0 1px; }
.checks { --face: #9cdcdc; --light: #c8f6f6; --dark: #527c80; width: 356px; flex: none; background: #9cdcdc; border: 1px solid #000; margin-right: 9px; }
.checklist .vbar { height: 220px; }
.checklist .vbar .gap { flex: none; height: 97px; }
.chk { height: 118px; }
.row1 { display: flex; padding: 0 2px 0 4px; height: 31px; }
.tick { width: 13px; height: 13px; margin: 4px 19px 0 0; border: 1px solid; border-color: var(--dark) var(--light) var(--light) var(--dark); flex: none; }
.tick svg { display: block; margin: -1px; }
.row1 > svg { margin: 3px 4px 0 0; flex: none; }
.cn { width: 104px; flex: none; overflow: hidden; white-space: nowrap; font: bold 14.6px/28px "Liberation Serif", serif; }
.erf { width: 44px; flex: none; height: 30px; font-weight: normal; text-align: center; line-height: 26px; }
.checks .field { width: 104px; flex: none; height: 30px; margin: 0 4px; padding-left: 6px; font-weight: normal; line-height: 17px; white-space: nowrap; }
.q { width: 30px; height: 30px; padding: 2px; flex: none; }
.q b { display: block; height: 22px; border: 1px solid #000; font: bold 21px/21px "Liberation Sans", sans-serif; text-align: center; }
.row2 { display: flex; gap: 4px; height: 25px; margin: 3px 1px 0 2px; }
.row2 .raised { flex: 1; text-align: center; font: bold 14.6px/21px "Liberation Serif", serif; }
.row3 { display: flex; gap: 4px; height: 35px; padding: 4px 0 0 3px; }
.when { width: 160px; margin-right: 37px; text-align: center; font-weight: normal; line-height: 15px; white-space: nowrap; flex: none; }
.alert { width: 18px; margin: -3px -1px 0 -3px; background: #fc1818; border: 1px solid #000; font: bold 14px/32px "Liberation Sans", sans-serif; text-align: center; }
.processed { height: 23px; padding-left: 3px; background: #ffffcc; border: solid #000; border-width: 1px 0 2px; font-weight: normal; line-height: 21px; }

/* histogram */
.histogram {
  left: 1499px; top: 329px; width: 440px; height: 576px; padding: 0 6px;
  background: linear-gradient(#8c9c94, #7c8c84 28px, #686868 60px, #c8c8c8 160px, #181818 165px, #101010 94%, #982020);
}
.histogram .wtitle { height: 28px; margin: 0 -6px; padding-left: 6px; border-radius: 6px 0 0; background: linear-gradient(90deg, #808080, #9ca49c 10%, #a0b8a8 30%, #98b0a4 45%, #acc4b4 80%); }
.histogram .wbody { width: 440px; height: 540px; background: #54ceb0; border: 1px solid #000; padding: 4px 0 0 3px; }
.htop { display: flex; gap: 2px; height: 284px; }
.hleft { width: 103px; flex: none; background: #9cdcdc; border: 1px solid #000; }
.radios { height: 137px; display: flex; flex-direction: column; border: 1px solid #000; border-top-width: 2px; padding: 0 0 0 4px; }
.radios label { height: 27px; flex: none; display: flex; align-items: center; gap: 5px; line-height: 16px; padding-bottom: 2px; }
.radios i { width: 11px; height: 11px; margin-left: 3px; transform: rotate(45deg); border: 2px solid; border-color: #c8f6f6 #6c9ca0 #527c80 #c0ecec; }
.radios .sel i { background: #c00048; border-color: #527c80 #c8f6f6 #fff #527c80; }
.hleft .lists { display: flex; height: 115px; justify-content: space-between; }
.hleft .lb { width: 82px; padding: 3px; }
.hleft .hot { height: 16px; line-height: 16px; width: 72px; }
.hleft .btns { display: flex; gap: 4px; padding: 0 2px; }
.hright { flex: 1; min-width: 0; border: 1px solid #000; border-bottom-width: 2px; background: #9cdcdc; }
.chart { height: 222px; border-bottom: 2px solid #000; overflow: hidden; }
.caption { width: 259px; height: 22px; margin: 3px 0 0 44px; padding-left: 3px; background: #b4ffff; border: 1px solid #000; box-shadow: 1px 2px 0 #888; font-style: italic; line-height: 26px; white-space: nowrap; }
.bars { display: flex; height: 143px; padding-left: 5px; border-bottom: 4px solid #000; }
.bar { width: 55px; flex: none; display: flex; flex-direction: column; justify-content: flex-end; text-align: center; line-height: 14px; font-weight: normal; -webkit-text-stroke: .4px #000; }
.bar i { display: block; background: #fc1818; border: solid #000; border-width: 1px 0 0 1px; }
.cut { text-align: left; }
.cut span { padding-left: 5px; }
.zero span { color: #e01818; -webkit-text-stroke-color: #e01818; }
.zero i { border: 0; }
.ranges { display: flex; width: 331px; margin: 2px 0 0 5px; height: 29px; border: 1px solid #000; border-left: 0; background: #fc1818; }
.ranges div { width: 55px; flex: none; padding: 2px 0 0 9px; border-left: 1px solid #000; white-space: pre; font-weight: normal; line-height: 15px; -webkit-text-stroke: .4px #000; }
.chart .hbar { margin-top: 6px; border-right: 0; }
.chart .hbar .thumb { flex: none; width: 33px; margin-left: 2px; }
.hlow { display: flex; height: 59px; }
.lb2 { width: 75px; flex: none; padding: 2px 3px; border-bottom: 0; }
.lb2 .hot { height: 15px; line-height: 15px; overflow: hidden; width: 63px; }
.lb2 div + div { line-height: 22px; }
.hlow .vbar { margin-left: 3px; width: 14px; flex: none; }
.reso { flex: 1; border-left: 1px solid #000; padding-left: 3px; }
.reso h4 { margin: 0 0 0 78px; font-size: 15px; line-height: 22px; }
.reso span { display: block; padding-left: 4px; font-weight: normal; -webkit-text-stroke: .4px #000; line-height: 22px; }
.slider { display: flex; height: 14px; background: #84b8b8; border: 2px solid; border-color: #527c80 #c8f6f6 #c8f6f6 #527c80; }
.slider i { width: 15px; background: #9cdcdc; border: 1px solid; border-color: #c8f6f6 #527c80 #527c80 #c8f6f6; }

.preview { display: flex; height: 163px; margin: 12px 0 0 0; padding: 19px 0 0 168px; border: 2px solid #286c5c; border-width: 2px 0 1px 3px; outline: 1px solid #a4ecd8; }
.hinfo { display: flex; height: 48px; padding: 4px 0 0 2px; }
.hinfo .ib { height: 38px; margin-right: 4px; }
.count { width: 303px; height: 42px; margin: -2px 3px 0 -2px; padding-left: 3px; background: #9cdcdc; border: 1px solid #000; line-height: 41px; }
.hinfo .wide { width: 34px; }
.hinfo .wide svg { width: 30px; height: 30px; }
.hclose { height: 27px; margin: 0 0 0 -3px; width: 462px; outline: 1px solid #000; text-align: center; line-height: 26px; }

/* results viewer */
.viewer {
  left: 2px; top: 637px; width: 509px; height: 402px; padding: 0 7px 6px 6px;
  background: linear-gradient(#d0a838, #d0b040 15%, #282018 20%, #282018 42%, #c8a028 49%, #c8a028 60%, #a82008 67%, #101010 70%, #181818 80%, #d8d8b0 88%, #f4f4c8);
}
.viewer .wtitle { height: 28px; margin: 0 -7px 0 -6px; padding-left: 6px; border-radius: 6px 6px 0 0; background: linear-gradient(90deg, #98a8a0, #b8c8c0 10%, #a8c0b4 23%, #84ccac 25%, #84ccac 29%, #141818 32%, #000 45%, #141414 62%, #404040 81%, #9c3818 84%, #d0b040 86%); }
.viewer .wbody { width: 495px; height: 366px; background: #54ceb0; border: 1px solid #000; }
.vhead { height: 30px; padding: 2px 3px 1px 3px; background: #9cdcdc; border-bottom: 2px solid #000; }
.vhead .raised { height: 23px; text-align: center; padding-right: 2px; font: bold 14.8px/19px "Liberation Serif", serif; }
.vmain { display: flex; height: 260px; border-bottom: 2px solid #000; }
.vl { width: 171px; flex: none; border-right: 2px solid #000; }
.tabs { display: flex; height: 29px; border-bottom: 1px solid #000; }
.tabs span { margin: 1px 2px 2px; height: 25px; text-align: center; font-weight: normal; font-style: italic; line-height: 22px; width: 46px; }
.tabs span + b + span { width: 36px; }
.tabs b { flex: 1; background: #9cdcdc; border: solid #000; border-width: 0 2px; text-align: center; font-style: italic; line-height: 28px; padding-right: 2px; }
.vl .lists { display: flex; height: 177px; }
.vl .lb { width: 150px; padding: 2px 3px; margin-right: 4px; }
.vl .lb .hot { font-weight: normal; -webkit-text-stroke: .3px; }
.lists .hot, .vr .lb div { height: 15px; line-height: 17px; margin-bottom: 3px; white-space: nowrap; }
.vl .hbar { width: 150px; margin-top: 4px; }
.repl { height: 33px; margin-top: 1px; padding: 1px 2px 1px 6px; border-top: 1px solid #000; }
.repl .opt { height: 30px; padding: 1px 5px 0 4px; }
.vr { flex: 1; }
.cats { display: flex; height: 30px; padding-top: 1px; background: #9cdcdc; }
.cat { width: 207px; height: 28px; margin-left: 1px; text-align: center; font-style: italic; line-height: 25px; }
.cats > span { line-height: 28px; margin-left: 1px; }
.cats .opt { width: 60px; margin-left: auto; margin-right: 2px; padding: 1px 5px 0 4px; height: 28px; }
.vr .lists { display: flex; height: 116px; }
.vr .lb { width: 303px; padding: 3px 3px; margin-right: 4px; }
.vbar .short { flex: none; height: 34px; }
.vr .hbar { width: 303px; margin-top: 3px; }
.nav { display: flex; height: 24px; gap: 4px; margin: 3px 2px 0 1px; }
.nav .raised { width: 44px; text-align: center; line-height: 21px; }
.nav .raised:first-child { width: 53px; }
.nav em { font-style: normal; line-height: 24px; margin-left: 1px; }
.nav .field { flex: 1; padding-left: 6px; line-height: 17px; white-space: nowrap; }
.zoomrow { display: flex; height: 34px; margin-top: 1px; }
.zb { width: 125px; padding: 1px 1px 2px 6px; border: 1px solid #000; border-left: 0; }
.zb .opt { height: 29px; padding: 1px 5px 0 5px; }
.sv { display: flex; width: 97px; border: 1px solid #000; border-left: 0; background: #9cdcdc; line-height: 33px; }
.lime { flex: 1; padding: 2px 2px 2px 5px; background: #14e014; --face: #18e818; --light: #a8f090; --dark: #107810; }
.lime .opt { height: 28px; justify-content: flex-end; padding-right: 5px; }
.cb { width: 13px; height: 13px; margin: 7px 3px 0 4px; border: 1px solid; border-color: #a4ecd8 #286c5c #286c5c #a4ecd8; }
.zoomrow > span { line-height: 29px; white-space: nowrap; letter-spacing: -.1px; }
.vr .btns { display: flex; justify-content: flex-end; gap: 4px; padding: 1px 2px 0 0; }
.undo { width: 34px; }
.ib.undo svg { width: 28px; }
.vinfo { height: 21px; border-bottom: 2px solid #000; text-align: center; white-space: pre; line-height: 21px; }
.verf { height: 20px; padding-left: 2px; background: #ffffcc; border-bottom: 1px solid #000; line-height: 21px; }
.vfoot { display: flex; gap: 4px; height: 34px; padding: 2px 1px; background: #9cdcdc; }
.vfoot div { width: 288px; height: 30px; text-align: center; line-height: 27px; }
.vfoot .ib { height: 30px; }
.hot-red { background: #e01818; border-color: #f06060 #a01010 #a01010 #f06060; }

/* taskbar */
.taskbar {
  display: flex;
  height: 40px;
  border-top: 1px solid #4c4840;
  box-shadow: inset 0 1px 0 #d0c8b8;
  background: linear-gradient(90deg, #8c8476, #a89c88 20%, #a89c88 36%, #b0a68e 50%, #948c7c 61%, #a09680 65%, #c4b898 75%, #b0a688 83%, #7c7666 88%, #706c5e 96%, #8c8878);
}
.orb { width: 59px; padding: 0 0 0 8px; }
.tb { display: flex; align-items: center; justify-content: center; width: 59px; height: 39px; margin-right: 3px; border: 1px solid #5c564c; border-radius: 3px; background: linear-gradient(135deg, #d4ccc0, #b8ac9c 50%, #b0a490); box-shadow: inset 0 0 0 1px rgba(255,255,255,.4); flex: none; }
.tb svg { width: 32px; height: 32px; }
.tb.flat { background: none; border-color: transparent; box-shadow: none; }
.w54 { width: 53px; margin-right: 9px; }
.tb.stack { box-shadow: inset 0 0 0 1px rgba(255,255,255,.4), 2px 0 0 #b8ae9c, 3px 0 0 #5c564c, 5px 0 0 #b8ae9c, 6px 0 0 #5c564c; }
.act { background: linear-gradient(135deg, #f4f0ec, #d8d0c8); }
.t64 { font: bold 9px "Liberation Sans", sans-serif; text-anchor: middle; }
.off { font: bold 13px "Liberation Serif", serif; text-anchor: middle; fill: #fff; }
.off.xl { font-size: 20px; fill: #205c18; }
.tray { display: flex; margin-left: auto; color: #fff; }
.qm { font: bold 12px "Liberation Sans", sans-serif; fill: #fff; text-anchor: middle; }
.clock { width: 78px; font: 12.3px/18px "Open Sans", sans-serif; text-align: center; padding-top: 2px; }
.peek { width: 14px; border: 1px solid #5c584c; background: linear-gradient(135deg, #b0aca0, #706c60); }
```
